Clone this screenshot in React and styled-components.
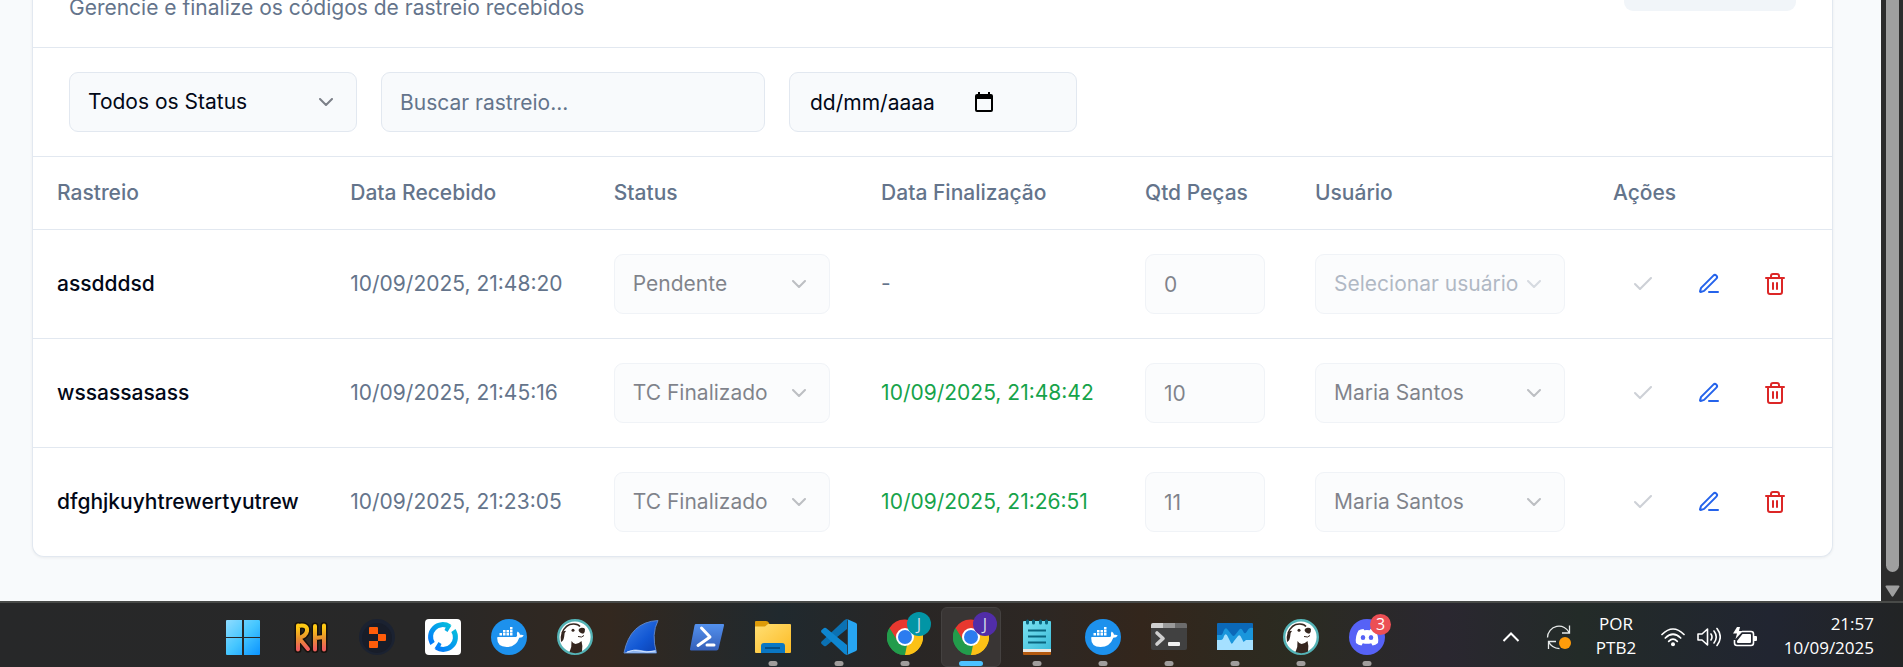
import React from 'react';
import styled, { createGlobalStyle, css } from 'styled-components';
import { Check, ChevronDown, Trash2 } from 'lucide-react';

const color = {
  page: '#f8fafc',
  card: '#ffffff',
  line: '#e2e8f0',
  text: '#020817',
  muted: '#64748b',
  green: '#16a34a',
  blue: '#2563eb',
  red: '#dc2626',
};

const GlobalStyle = createGlobalStyle`
  *, *::before, *::after { box-sizing: border-box; }
  body {
    margin: 0;
    background: ${color.page};
    color: ${color.text};
    font-family: Inter, "Liberation Sans", sans-serif;
    font-size: 21px;
    line-height: 30px;
  }
`;

/* ---------- page frame ---------- */

const Screen = styled.div`
  display: flex;
  flex-direction: column;
  height: 100vh;
`;

const Browser = styled.div`
  display: flex;
  flex: 1;
  min-height: 0;
  overflow: hidden;
`;

const Page = styled.main`
  display: flex;
  flex: 1;
  min-width: 0;
  flex-direction: column;
  justify-content: flex-end;
  padding: 0 48px 44px 32px;
`;

const ScrollTrack = styled.div`
  display: flex;
  flex-direction: column;
  align-items: center;
  gap: 13px;
  width: 22px;
  padding-bottom: 4px;
  background: #2c2c2c;
`;

const ScrollThumb = styled.div`
  flex: 1;
  width: 13px;
  border-radius: 0 0 7px 7px;
  background: #9f9f9f;
`;

/* ---------- card ---------- */

const Card = styled.section`
  border: 1px solid ${color.line};
  border-top: 0;
  border-radius: 0 0 12px 12px;
  background: ${color.card};
  box-shadow: 0 1px 3px rgba(0, 0, 0, 0.06);
`;

const CardHeader = styled.header`
  display: flex;
  align-items: flex-end;
  justify-content: space-between;
  padding: 0 36px 24px;
  border-bottom: 1px solid ${color.line};
`;

const Subtitle = styled.p`
  margin: 0;
  color: ${color.muted};
`;

const HeaderButton = styled.button`
  width: 172px;
  height: 60px;
  margin-bottom: 12px;
  border: 0;
  border-radius: 9px;
  background: #f1f5f9;
`;

const Filters = styled.div`
  display: flex;
  gap: 24px;
  padding: 24px 36px;
  border-bottom: 1px solid ${color.line};
`;

const fieldStyle = css`
  width: 100%;
  height: 60px;
  margin: 0;
  padding: 0 18px;
  border: 1px solid ${color.line};
  border-radius: 9px;
  outline: 0;
  background: ${color.page};
  color: ${color.text};
  font: inherit;
`;

const Field = styled.div`
  position: relative;
  flex: none;
  width: ${(p) => p.$width}px;
  opacity: ${(p) => (p.$dim ? 0.5 : 1)};
`;

const TextInput = styled.input`
  ${fieldStyle}
  &::placeholder {
    color: ${color.muted};
    opacity: 1;
  }
  &:disabled { opacity: 1; }
`;

const DateInput = styled(TextInput)`
  padding: 0 20px;
  &::placeholder { color: ${color.text}; }
`;

const SelectBox = styled.select`
  ${fieldStyle}
  appearance: none;
  padding-right: 40px;
  color: ${(p) => (p.$empty ? color.muted : color.text)};
  &:disabled { opacity: 1; }
`;

const FieldIcon = styled.span`
  position: absolute;
  top: 0;
  right: 19px;
  display: flex;
  align-items: center;
  height: 100%;
  opacity: 0.5;
  pointer-events: none;
`;

const CalendarButton = styled.button`
  position: absolute;
  top: 0;
  right: 84px;
  display: flex;
  align-items: center;
  height: 100%;
  padding: 0;
  border: 0;
  background: none;
`;

/* ---------- table ---------- */

const Table = styled.table`
  width: 100%;
  border-collapse: separate;
  border-spacing: 0;
  table-layout: fixed;
`;

const Column = styled.col`
  width: ${(p) => p.$share}%;
`;

const HeadCell = styled.th`
  height: 73px;
  padding: 0 24px;
  border-bottom: 1px solid ${color.line};
  color: ${color.muted};
  font-weight: 500;
  text-align: left;
`;

const Cell = styled.td`
  padding: 24px;
  border-bottom: 1px solid ${color.line};
  color: ${(p) => color[p.$tone || 'muted']};
  font-weight: ${(p) => (p.$strong ? 500 : 400)};
  white-space: nowrap;
  tr:last-child > & { border-bottom: 0; }
`;

const Actions = styled.div`
  display: flex;
  gap: 6px;
`;

const ActionButton = styled.button`
  display: flex;
  align-items: center;
  justify-content: center;
  flex: none;
  width: 60px;
  height: 54px;
  padding: 0;
  border: 0;
  border-radius: 9px;
  background: none;
  color: ${(p) => color[p.$tone]};
  &:disabled { color: #9ca3af; opacity: 0.5; }
`;

/* ---------- taskbar ---------- */

const Taskbar = styled.footer`
  display: flex;
  justify-content: space-between;
  flex: none;
  height: 66px;
  padding: 0 29px 0 215px;
  border-top: 2px solid #484a48;
  background: linear-gradient(90deg, #272829 0%, #282828 22%, #33281f 32%, #20292e 41%, #292625 48%,
    #2d2723 55%, #33261c 60%, #2b2b21 68%, #2a2730 76%, #232b28 83%, #212531 93%, #222425 100%);
  font-family: "Open Sans", "Noto Sans", sans-serif;
`;

const Apps = styled.nav`
  display: flex;
  gap: 6px;
  padding-top: 4px;
`;

const AppButton = styled.button`
  position: relative;
  display: flex;
  align-items: center;
  justify-content: center;
  width: 60px;
  height: 60px;
  padding: 0;
  border: 1px solid ${(p) => (p.$active ? '#444140' : 'transparent')};
  border-radius: 6px;
  background: ${(p) => (p.$active ? '#393534' : 'none')};
`;

const Indicator = styled.span`
  position: absolute;
  bottom: 0;
  left: 50%;
  width: ${(p) => (p.$active ? 24 : 9)}px;
  height: 5px;
  border-radius: 3px;
  background: ${(p) => (p.$active ? '#4cc2ff' : '#a09d9c')};
  transform: translateX(-50%);
`;

const Badge = styled.span`
  position: absolute;
  top: ${(p) => (p.$small ? 6 : 4)}px;
  right: ${(p) => (p.$small ? 5 : 3)}px;
  width: ${(p) => (p.$small ? 21 : 24)}px;
  height: ${(p) => (p.$small ? 21 : 24)}px;
  border-radius: 50%;
  background: ${(p) => p.$fill};
  color: ${(p) => (p.$small ? '#ffffff' : '#d5dbe8')};
  font-family: "Open Sans", "Noto Sans", sans-serif;
  font-size: 16px;
  line-height: ${(p) => (p.$small ? 21 : 24)}px;
  text-align: center;
`;

const Tray = styled.div`
  display: flex;
  align-items: center;
  color: #ffffff;
  font-size: 17px;
`;

const TrayItem = styled.div`
  display: flex;
  align-items: center;
  justify-content: center;
  gap: 12px;
  width: ${(p) => p.$width}px;
  padding-top: 4px;
`;

const TrayText = styled.div`
  width: ${(p) => p.$width}px;
  padding-top: 2px;
  line-height: 24px;
  text-align: ${(p) => p.$align};
  white-space: nowrap;
`;

/* ---------- drawings ---------- */

const PenIcon = () => (
  <svg width="24" height="24" viewBox="0 0 24 24" fill="none" stroke="currentColor" strokeWidth="2" strokeLinecap="round" strokeLinejoin="round">
    <path d="M12 20h9" />
    <path d="M16.376 3.622a1 1 0 0 1 3.002 3.002L7.368 18.635a2 2 0 0 1-.855.506l-2.872.838a.5.5 0 0 1-.62-.62l.838-2.872a2 2 0 0 1 .506-.854z" />
  </svg>
);

const CalendarIcon = () => (
  <svg width="18" height="20" viewBox="0 0 18 20">
    <path fill="#000" fillRule="evenodd" d="M2 2h1V0h2v2h8V0h2v2h1a2 2 0 0 1 2 2v14a2 2 0 0 1-2 2H2a2 2 0 0 1-2-2V4a2 2 0 0 1 2-2Zm0 5v11h14V7H2Z" />
  </svg>
);

const ScrollArrow = () => (
  <svg width="15" height="12" viewBox="0 0 15 12">
    <path d="M1.500.5h12q1.500 0 .8 1.500L8.500 11q-1 1.500-2 0L.7 2Q0 .5 1.500.5Z" fill="#9f9f9f" />
  </svg>
);

const WindowsLogo = () => (
  <svg width="36" height="36" viewBox="2 0 36 36" overflow="visible">
    <defs>
      <linearGradient id="win" x1="0" y1="0" x2="1" y2="1">
        <stop offset="0" stopColor="#8fdcff" />
        <stop offset=".5" stopColor="#45c6ff" />
        <stop offset="1" stopColor="#0a93ff" />
      </linearGradient>
    </defs>
    <path fill="url(#win)" d="M2 1h15v17H1V2q0-1 1-1Zm17 0h15q1 0 1 1v16H19ZM1 19h16v17H2q-1 0-1-1Zm18 0h16v16q0 1-1 1H19Z" />
  </svg>
);

const RhLogo = () => (
  <svg width="40" height="36" viewBox="0 0 40 36">
    <defs>
      <linearGradient id="rh" gradientUnits="userSpaceOnUse" x1="0" y1="4" x2="0" y2="32">
        <stop offset=".15" stopColor="#ffc914" />
        <stop offset=".55" stopColor="#e8922f" />
        <stop offset=".9" stopColor="#f0605c" />
      </linearGradient>
    </defs>
    <g fill="none" strokeLinecap="round" strokeLinejoin="round">
      <path stroke="#17120d" strokeWidth="7" d="M7 6.500v24M7 7q10-2 9 5-1 5-8 7l9 11M24 7v23.500M33 6.500v24M24 19l9-1" />
      <path stroke="url(#rh)" strokeWidth="4" d="M7 6.500v24M7 7q10-2 9 5-1 5-8 7l9 11M24 7v23.500M33 6.500v24M24 19l9-1" />
    </g>
  </svg>
);

const ReplitLogo = () => (
  <svg width="36" height="36" viewBox="0 0 36 36">
    <circle cx="18" cy="18" r="18" fill="#1b2231" />
    <circle cx="18" cy="19" r="15" fill="#181d29" />
    <path fill="#ff5d0a" d="M11 8h7q1 0 1 1v6h-9V9q0-1 1-1Zm8 7h7q1 0 1 1v5q0 1-1 1h-7Zm-9 7h9v6q0 1-1 1h-7q-1 0-1-1Z" />
  </svg>
);

const RingLogo = () => (
  <svg width="36" height="36" viewBox="0 0 36 36">
    <defs>
      <linearGradient id="ring" gradientUnits="userSpaceOnUse" x1="30" y1="4" x2="6" y2="30">
        <stop offset="0" stopColor="#04c9d8" />
        <stop offset="1" stopColor="#0470ff" />
      </linearGradient>
    </defs>
    <rect width="36" height="36" rx="4" fill="#fff" />
    <g fill="none" stroke="url(#ring)" strokeWidth="5">
      <path d="M24.500 7.600A12.200 12.200 0 0 0 7.600 24.500" />
      <path d="M28.400 11.500A12.200 12.200 0 0 1 11.500 28.400" />
    </g>
    <path fill="url(#ring)" d="M22 5.800l4.500.7-4 6.500-3-2ZM14 30.200l-4.500-.7 4-6.500 3 2Z" />
  </svg>
);

const DockerLogo = () => (
  <svg width="36" height="36" viewBox="0 0 36 36">
    <circle cx="18" cy="18" r="18" fill="#1d91ed" />
    <path fill="#fff" d="M6.500 18h18.500q1.500-.6 1-2.600-.4-1.400.8-2.900 2 1.300 2.200 3.300 2-.5 3.800.6-1.200 2.300-4.500 2.300Q25 28 15.500 28 6 28 6.200 19Z" />
    <path fill="#fff" d="M8.500 14h2.500v2.500H8.500zm3.500 0h2.500v2.500H12zm3.500 0H18v2.500h-2.500zm3.500 0h2.500v2.500H19zM12 11h2.500v2.500H12zm3.500 0H18v2.500h-2.500zm3.500 0h2.500v2.500H19zM19 8h2.500v2.500H19z" />
  </svg>
);

const BeaverLogo = () => (
  <svg width="36" height="36" viewBox="0 0 36 36">
    <circle cx="18" cy="18" r="16.800" fill="#fff" stroke="#54b3b6" strokeWidth="2.400" />
    <path fill="#35261f" d="M14.500 22q1.500 2.500 4 3 3 0 6-3 1.500 5 .5 10.500-6 3-12.500.5 2.500-5 2-11Z" />
    <path fill="#35261f" d="M21.500 11q.5-2 3-2.300 2.500-.2 3.500 1.300.4 3-1.800 4.800-4-.6-4.700-3.800Z" />
    <circle cx="16" cy="11.300" r="1.500" fill="#35261f" />
    <path d="M5 14Q9 4.500 17 5q4.500.3 6 2.500" fill="none" stroke="#35261f" strokeWidth="1.400" />
    <path fill="#35261f" d="M4.500 14q2.500-3 4.500-2-2 1.500-1.800 5.500Q6.500 22 4 23q-1-5 .5-9Z" />
    <path d="M21 17.500q4 1.500 6-1" fill="none" stroke="#35261f" />
  </svg>
);

const FinLogo = () => (
  <svg width="36" height="36" viewBox="0 0 36 36">
    <defs>
      <linearGradient id="fin" x1="0" y1="0" x2="1" y2="1">
        <stop offset="0" stopColor="#3f82ea" />
        <stop offset=".6" stopColor="#1257d3" />
        <stop offset="1" stopColor="#0b3fae" />
      </linearGradient>
    </defs>
    <path d="M1 34Q7 3 35 1.500 28 15 33.500 34Z" fill="url(#fin)" stroke="#5d83c4" />
    <path d="M1.500 34q8-5 16-3 8 2 15.500 0v3Z" fill="#8db4ee" />
    <path d="M4 33q7-3 13-1t15 0" stroke="#cfe2ff" fill="none" />
  </svg>
);

const PowerShellLogo = () => (
  <svg width="36" height="36" viewBox="0 0 36 36">
    <defs>
      <linearGradient id="ps" x1="0" y1="0" x2="0" y2="1">
        <stop offset="0" stopColor="#5391ee" />
        <stop offset="1" stopColor="#3560b9" />
      </linearGradient>
    </defs>
    <path d="M7 5h27q1.400 0 1 1.400L29.500 30q-.4 1.400-2 1.400H2Q.6 31.400 1 30L5.500 6.400Q5.800 5 7 5Z" fill="url(#ps)" />
    <path d="M12.500 9l8.500 9-12 8.500M18 26h7" stroke="#fff" strokeWidth="3" fill="none" strokeLinecap="round" strokeLinejoin="round" />
  </svg>
);

const FolderLogo = () => (
  <svg width="36" height="36" viewBox="0 0 36 36">
    <defs>
      <linearGradient id="folder" x1="0" y1="0" x2="1" y2="1">
        <stop offset="0" stopColor="#ffdf74" />
        <stop offset="1" stopColor="#fdbb24" />
      </linearGradient>
    </defs>
    <path d="M1 2h10q2 0 3 2l1 2v4H0V3q0-1 1-1Z" fill="#dd9b08" />
    <path d="M0 7.500h10l3-2.500h22q1 0 1 1v27q0 1-1 1H1q-1 0-1-1Z" fill="url(#folder)" />
    <path d="M6 34V27q0-3 3-3h18q3 0 3 3v7Z" fill="#0a77c4" />
    <path d="M10 29h15" stroke="#064f86" strokeWidth="2" />
  </svg>
);

const CodeLogo = () => (
  <svg width="36" height="36" viewBox="0 0 36 36">
    <path fill="#0b71b3" d="M26 0v10L5 27q-1 .7-2 0l-2.400-2.100q-1.100-1.100 0-2.300L23 1.500Q24.500.2 26 0Z" />
    <path fill="#0e86d0" d="M26 36V26L5 9q-1-.7-2 0L.6 11.100q-1.100 1.100 0 2.300L23 34.500q1.500 1.300 3 1.500Z" />
    <path fill="#27a5f2" d="M26 0l9 4q1 .6 1 1.500v25q0 .9-1 1.500l-9 4q.8-.6.8-2V2q0-1.400-.8-2Z" />
  </svg>
);

const ChromeLogo = () => (
  <svg width="36" height="36" viewBox="0 0 36 36">
    <path fill="#fbc116" d="M18 18 33.600 9A18 18 0 0 1 18 36Z" />
    <path fill="#229c4b" d="M18 18v18A18 18 0 0 1 2.400 9Z" />
    <path fill="#e8382f" d="M2.400 9 10.500 22 18 10h15.600A18 18 0 0 0 2.400 9Z" />
    <path fill="#229c4b" d="M2.400 9l8 13.500L20 26l-2 10A18 18 0 0 1 2.400 9Z" />
    <path fill="#fbc116" d="M18 36l8-13.500-1-12.500h9A18 18 0 0 1 18 36Z" />
    <circle cx="18" cy="18" r="9" fill="#fff" />
    <circle cx="18" cy="18" r="7" fill="#2b7cf0" />
  </svg>
);

const NotepadLogo = () => (
  <svg width="30" height="36" viewBox="0 0 30 36">
    <defs>
      <linearGradient id="note" x1="0" y1="0" x2="1" y2="1">
        <stop offset="0" stopColor="#7be2f2" />
        <stop offset="1" stopColor="#3cbcd9" />
      </linearGradient>
    </defs>
    <path d="M1 32h28v3q0 1-1 1H2q-1 0-1-1Z" fill="#b35a10" />
    <path d="M1 29h28v4H1Z" fill="#ece7e2" />
    <path d="M1 3q0-1 1-1h26q1 0 1 1v27H1Z" fill="url(#note)" />
    <path d="M6 11.500h18M6 17.500h18M6 23.500h18" stroke="#09657f" strokeWidth="2" />
    <path d="M5.500 2v2M11.500 2v2M18.500 2v2M24.500 2v2" stroke="#09657f" strokeWidth="3" strokeLinecap="round" />
  </svg>
);

const TerminalLogo = () => (
  <svg width="36" height="36" viewBox="0 0 36 36">
    <rect y="4" width="36" height="27" rx="2" fill="#414141" />
    <path d="M2 4h10v5H0V6q0-2 2-2Z" fill="#d0d0d0" />
    <path d="M12 4h12v5H12Z" fill="#9a9a9a" />
    <path d="M24 4h10q2 0 2 2v3H24Z" fill="#6c6c6c" />
    <path d="M6 14l6 5.500L6 25" stroke="#cfcfcf" strokeWidth="3.600" fill="none" strokeLinecap="round" strokeLinejoin="round" />
    <rect x="17" y="23" width="12" height="4" rx="1" fill="#f0f0f0" />
  </svg>
);

const MonitorLogo = () => (
  <svg width="36" height="36" viewBox="0 0 36 36">
    <rect y="4" width="36" height="27" rx="1" fill="#0b68b8" />
    <path d="M0 16h4q1.500 0 2.500-4 2-5 4.500-1l4 5q1.500 2 3 0l4-5q2-3 4 1 1.500 4 3.500 1l2-3q2-2 4.500-1v22H0Z" fill="#1a96dc" />
    <path d="M0 21h4q2 0 3-4 2-4 4 1l3 6q1 2 3-2l4-5q2-2 3.500 2l2 4 2.500-2h7v10H0Z" fill="#a5e0ff" />
  </svg>
);

const DiscordLogo = () => (
  <svg width="36" height="36" viewBox="0 0 36 36">
    <circle cx="18" cy="18" r="18" fill="#5662f6" />
    <path fill="#fff" fillRule="evenodd" d="M14.500 10q-3 .4-5 1.500Q6 17 7 24q2.500 2 5.500 2.500l1.300-2.300q4.200 1 8.400 0l1.300 2.300Q26.500 26 29 24q1-7-2.500-12.500-2-1.100-5-1.500l-.8 1.300q-2.700-.4-5.400 0ZM14 16a2.300 2.500 0 1 1 0 5 2.300 2.500 0 0 1 0-5Zm8 0a2.300 2.500 0 1 1 0 5 2.300 2.500 0 0 1 0-5Z" />
  </svg>
);

const CaretUp = () => (
  <svg width="18" height="12" viewBox="0 0 18 12" fill="none" stroke="#fff" strokeWidth="2">
    <path d="M1.500 10 9 2.500l7.500 7.500" />
  </svg>
);

const SyncIcon = () => (
  <svg width="26" height="26" viewBox="0 0 26 26" fill="none" stroke="#e8ebea" strokeWidth="1.300">
    <path d="M1.500 13.500a11.500 11.500 0 0 1 22-4.500M23.500 1.500V9h-7.500" />
    <path d="M2.500 25v-7.500H10M2.500 17.500q3 6.500 11 7.200" />
    <circle cx="19" cy="19" r="6" fill="#ff9c0a" stroke="none" />
  </svg>
);

const WifiIcon = () => (
  <svg width="24" height="20" viewBox="0 0 24 20" fill="none" stroke="#fff" strokeWidth="1.700" strokeLinecap="round">
    <path d="M1 7.500q11-11 22 0M4.300 11q7.700-7.500 15.400 0M7.700 14.300q4.300-4.200 8.600 0" />
    <circle cx="12" cy="17.200" r="2" fill="#fff" stroke="none" />
  </svg>
);

const SoundIcon = () => (
  <svg width="24" height="20" viewBox="0 0 24 20" fill="none" stroke="#fff" strokeWidth="1.600" strokeLinecap="round" strokeLinejoin="round">
    <path d="M1 7h4l5.500-5v16L5 13H1Z" />
    <path d="M14 7q2 3 0 6M17 4q4.500 6 0 12M20 1.500q6.500 8.500 0 17" />
  </svg>
);

const BatteryIcon = () => (
  <svg width="24" height="20" viewBox="0 0 24 20">
    <path d="M9 4.500h9q2.500 0 2.500 2.500v9q0 2.500-2.500 2.500H4Q1.500 18.500 1.500 16v-3" fill="none" stroke="#fff" strokeWidth="1.600" />
    <path d="M9.500 7H17q1 0 1 1v7q0 1-1 1H5q-1 0-1-1v-1ZM21 9h2q1 0 1 1v3q0 1-1 1h-2ZM4 0h3L6 4h4L2.500 12l1.500-5.500H0Z" fill="#fff" />
  </svg>
);

/* ---------- composed parts ---------- */

function Select({ label, value, width, disabled, empty }) {
  return (
    <Field $width={width} $dim={disabled}>
      <SelectBox aria-label={label} defaultValue={value} disabled={disabled} $empty={empty}>
        <option value={value}>{value}</option>
      </SelectBox>
      <FieldIcon>
        <ChevronDown size={24} color={empty ? color.muted : color.text} />
      </FieldIcon>
    </Field>
  );
}

const columns = [
  ['Rastreio', 16.3],
  ['Data Recebido', 14.65],
  ['Status', 14.86],
  ['Data Finalização', 14.67],
  ['Qtd Peças', 9.45],
  ['Usuário', 16.56],
  ['Ações', 13.51],
];

const rows = [
  { code: 'assdddsd', received: '10/09/2025, 21:48:20', status: 'Pendente', finished: null, quantity: '0', user: null },
  { code: 'wssassasass', received: '10/09/2025, 21:45:16', status: 'TC Finalizado', finished: '10/09/2025, 21:48:42', quantity: '10', user: 'Maria Santos' },
  { code: 'dfghjkuyhtrewertyutrew', received: '10/09/2025, 21:23:05', status: 'TC Finalizado', finished: '10/09/2025, 21:26:51', quantity: '11', user: 'Maria Santos' },
];

const apps = [
  { name: 'Iniciar', Logo: WindowsLogo },
  { name: 'RH', Logo: RhLogo },
  { name: 'Replit', Logo: ReplitLogo },
  { name: 'Rancher', Logo: RingLogo },
  { name: 'Docker', Logo: DockerLogo },
  { name: 'DBeaver', Logo: BeaverLogo },
  { name: 'Wireshark', Logo: FinLogo },
  { name: 'PowerShell', Logo: PowerShellLogo },
  { name: 'Explorador de Arquivos', Logo: FolderLogo, open: true },
  { name: 'Visual Studio Code', Logo: CodeLogo, open: true },
  { name: 'Chrome', Logo: ChromeLogo, open: true, badge: 'J', fill: '#0295a5' },
  { name: 'Chrome, perfil 2', Logo: ChromeLogo, open: true, active: true, badge: 'J', fill: '#512da8' },
  { name: 'Bloco de Notas', Logo: NotepadLogo, open: true },
  { name: 'Docker Desktop', Logo: DockerLogo, open: true },
  { name: 'Terminal', Logo: TerminalLogo, open: true },
  { name: 'Monitor', Logo: MonitorLogo, open: true },
  { name: 'DBeaver, janela 2', Logo: BeaverLogo, open: true },
  { name: 'Discord', Logo: DiscordLogo, open: true, badge: '3', fill: '#ec4f55', small: true },
];

export default function App() {
  return (
    <Screen>
      <GlobalStyle />
      <Browser>
        <Page>
          <Card>
            <CardHeader>
              <Subtitle>Gerencie e finalize os códigos de rastreio recebidos</Subtitle>
              <HeaderButton type="button" aria-label="Atualizar" />
            </CardHeader>
            <Filters>
              <Select label="Status" value="Todos os Status" width={288} />
              <Field $width={384}>
                <TextInput type="text" aria-label="Buscar rastreio" placeholder="Buscar rastreio..." />
              </Field>
              <Field $width={288}>
                <DateInput type="text" aria-label="Data" placeholder="dd/mm/aaaa" />
                <CalendarButton type="button" aria-label="Abrir calendário"><CalendarIcon /></CalendarButton>
              </Field>
            </Filters>
            <Table>
              <colgroup>
                {columns.map(([name, share]) => <Column key={name} $share={share} />)}
              </colgroup>
              <thead>
                <tr>
                  {columns.map(([name]) => <HeadCell key={name} scope="col">{name}</HeadCell>)}
                </tr>
              </thead>
              <tbody>
                {rows.map((row) => (
                  <tr key={row.code}>
                    <Cell $tone="text" $strong>{row.code}</Cell>
                    <Cell>{row.received}</Cell>
                    <Cell><Select label={`Status de ${row.code}`} value={row.status} width={216} disabled /></Cell>
                    <Cell $tone={row.finished ? 'green' : 'muted'}>{row.finished || '-'}</Cell>
                    <Cell>
                      <Field $width={120} $dim>
                        <TextInput type="text" inputMode="numeric" aria-label={`Peças de ${row.code}`} defaultValue={row.quantity} disabled />
                      </Field>
                    </Cell>
                    <Cell>
                      <Select label={`Usuário de ${row.code}`} value={row.user || 'Selecionar usuário'} width={250} disabled empty={!row.user} />
                    </Cell>
                    <Cell>
                      <Actions>
                        <ActionButton type="button" aria-label="Finalizar" $tone="muted" disabled><Check size={24} /></ActionButton>
                        <ActionButton type="button" aria-label="Editar" $tone="blue"><PenIcon /></ActionButton>
                        <ActionButton type="button" aria-label="Excluir" $tone="red"><Trash2 size={24} /></ActionButton>
                      </Actions>
                    </Cell>
                  </tr>
                ))}
              </tbody>
            </Table>
          </Card>
        </Page>
        <ScrollTrack>
          <ScrollThumb />
          <ScrollArrow />
        </ScrollTrack>
      </Browser>
      <Taskbar>
        <Apps aria-label="Barra de tarefas">
          {apps.map(({ name, Logo, open, active, badge, fill, small }) => (
            <AppButton key={name} type="button" aria-label={name} $active={active}>
              <Logo />
              {badge && <Badge $fill={fill} $small={small}>{badge}</Badge>}
              {open && <Indicator $active={active} />}
            </AppButton>
          ))}
        </Apps>
        <Tray>
          <TrayItem $width={48}><CaretUp /></TrayItem>
          <TrayItem $width={48}><SyncIcon /></TrayItem>
          <TrayText $width={66} $align="center">POR<br />PTB2</TrayText>
          <TrayItem $width={120}>
            <WifiIcon />
            <SoundIcon />
            <BatteryIcon />
          </TrayItem>
          <TrayText $width={105} $align="right">21:57<br />10/09/2025</TrayText>
        </Tray>
      </Taskbar>
    </Screen>
  );
}
